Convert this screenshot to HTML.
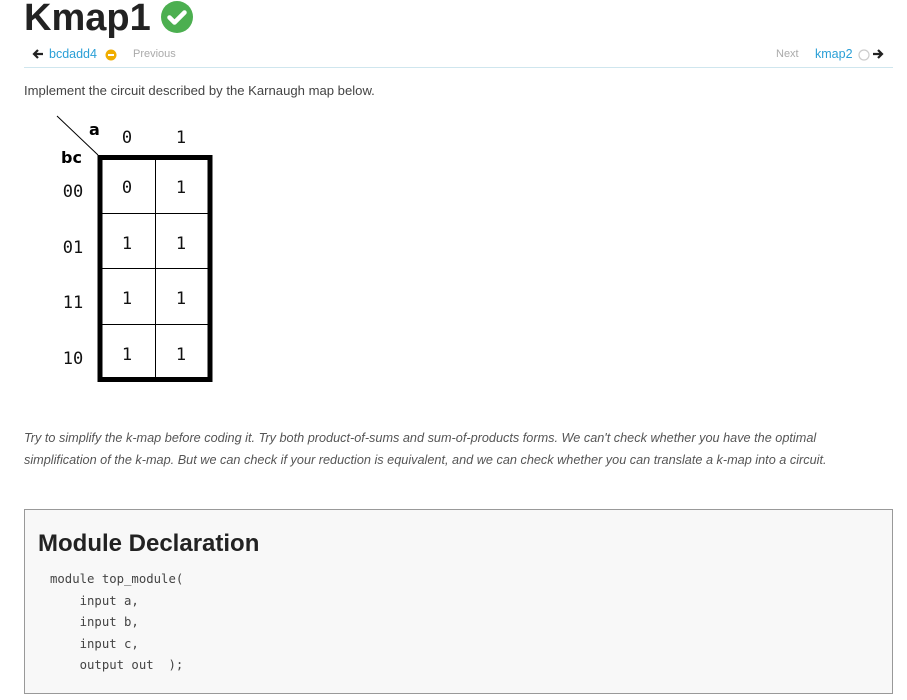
<!DOCTYPE html>
<html><head><meta charset="utf-8"><style>
body{margin:0;background:#fff;width:907px;height:700px;overflow:hidden;font-family:"Liberation Sans",sans-serif;color:#333;position:relative}
.a{position:absolute;white-space:nowrap}
.mono{font-family:"DejaVu Sans Mono","Liberation Mono",monospace}
</style></head><body>
<div class="a" style="left:24px;top:-3px;font-size:38px;font-weight:bold;color:#222">Kmap1</div>
<svg class="a" style="left:161px;top:1px" width="32" height="32" viewBox="0 0 32 32"><circle cx="16" cy="16" r="16" fill="#4caf50"/><path d="M8.5 16.5l5 5 10-10" stroke="#fff" stroke-width="4.5" fill="none" stroke-linecap="round" stroke-linejoin="round"/></svg>
<svg class="a" style="left:32px;top:48px" width="12" height="12" viewBox="0 0 12 12"><path d="M11 6H2M6 2L2 6l4 4" stroke="#222" stroke-width="2.2" fill="none"/></svg>
<div class="a" style="left:49px;top:47px;font-size:12.5px;color:#2a9fd6">bcdadd4</div>
<svg class="a" style="left:105px;top:49px" width="12" height="12"><circle cx="6" cy="6" r="5.5" fill="#f0ad00"/><rect x="3" y="5" width="6" height="2" fill="#fff"/></svg>
<div class="a" style="left:133px;top:48px;font-size:11px;color:#aaa">Previous</div>
<div class="a" style="left:776px;top:48px;font-size:11px;color:#aaa">Next</div>
<div class="a" style="left:815px;top:47px;font-size:12.5px;color:#2a9fd6">kmap2</div>
<svg class="a" style="left:858px;top:49px" width="12" height="12"><circle cx="6" cy="6" r="5" fill="none" stroke="#ccc" stroke-width="1.2"/></svg>
<svg class="a" style="left:872px;top:48px" width="12" height="12" viewBox="0 0 12 12"><path d="M1 6h9M6 2l4 4-4 4" stroke="#222" stroke-width="2.2" fill="none"/></svg>
<div class="a" style="left:24px;top:67px;width:869px;height:1px;background:#cfe6ee"></div>
<div class="a" style="left:24px;top:83px;font-size:13.1px;color:#444">Implement the circuit described by the Karnaugh map below.</div>

<svg class="a" style="left:40px;top:110px" width="190" height="280">
<line x1="17" y1="6" x2="58" y2="45" stroke="#000" stroke-width="1"/>
<text x="49" y="25" font-family="DejaVu Sans" font-weight="bold" font-size="16">a</text>
<text x="21" y="53" font-family="DejaVu Sans" font-weight="bold" font-size="16">bc</text>
<g font-family="DejaVu Sans Mono" font-size="17" fill="#111" text-anchor="middle">
<text x="87" y="33">0</text><text x="141" y="33">1</text>
<text x="33" y="87">00</text><text x="33" y="143">01</text><text x="33" y="198">11</text><text x="33" y="254">10</text>
<text x="87" y="83">0</text><text x="141" y="83">1</text>
<text x="87" y="139">1</text><text x="141" y="139">1</text>
<text x="87" y="194">1</text><text x="141" y="194">1</text>
<text x="87" y="250">1</text><text x="141" y="250">1</text>
</g>
<rect x="60" y="47.5" width="110" height="222" fill="none" stroke="#000" stroke-width="5"/>
<line x1="115.5" y1="48" x2="115.5" y2="269" stroke="#000"/>
<line x1="60" y1="103.5" x2="170" y2="103.5" stroke="#000"/>
<line x1="60" y1="158.5" x2="170" y2="158.5" stroke="#000"/>
<line x1="60" y1="214.5" x2="170" y2="214.5" stroke="#000"/>
</svg>

<div class="a" style="left:24px;top:427px;font-size:12.7px;font-style:italic;color:#555;line-height:22px">Try to simplify the k-map before coding it. Try both product-of-sums and sum-of-products forms. We can't check whether you have the optimal<br>simplification of the k-map. But we can check if your reduction is equivalent, and we can check whether you can translate a k-map into a circuit.</div>

<div class="a" style="left:24px;top:509px;width:867px;height:183px;border:1px solid #999;background:#f8f8f8"></div>
<div class="a" style="left:38px;top:530px;font-size:24px;font-weight:bold;color:#222">Module Declaration</div>
<pre class="mono" style="position:absolute;white-space:pre;left:50px;top:569px;margin:0;font-size:12.3px;line-height:21.5px;color:#444">module top_module(
    input a,
    input b,
    input c,
    output out  );</pre>
</body></html>
